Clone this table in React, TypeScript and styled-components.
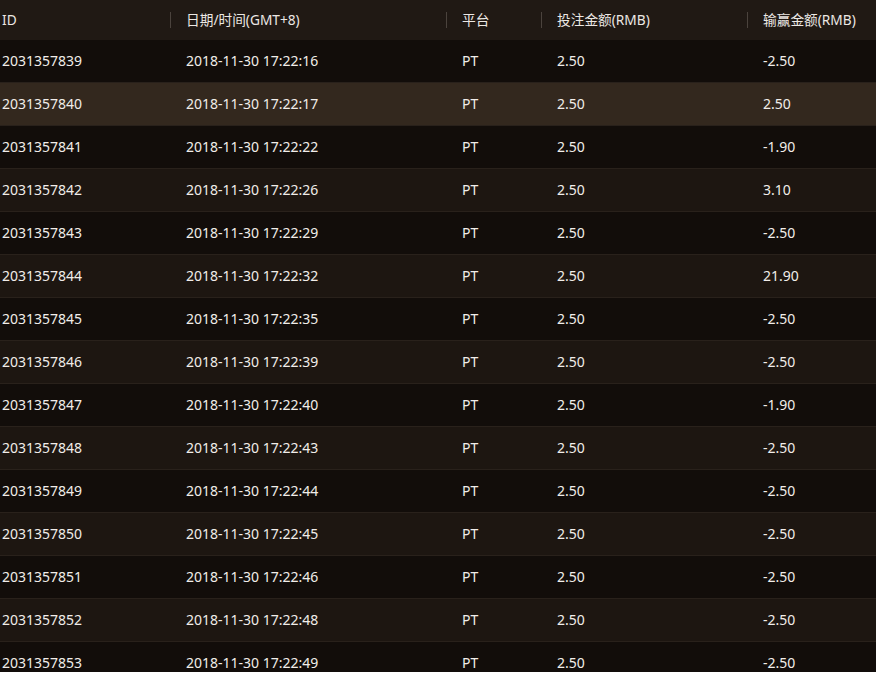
import styled, { createGlobalStyle } from 'styled-components';

const GlobalStyle = createGlobalStyle`
  html, body {
    margin: 0;
    padding: 0;
    background: #ffffff;
  }
  body {
    font-family: "Noto Sans", "Noto Sans CJK SC", sans-serif;
  }
`;

const StyledViewport = styled.div`
  width: 876px;
  height: 672px;
  overflow: hidden;
  background: #130e0b;
`;

const StyledTable = styled.div`
  display: grid;
  grid-template-columns: 170px 276px 95px 206px 129px;
  width: 876px;
`;

const StyledHeaderCell = styled.div<{ $first?: boolean }>`
  position: relative;
  height: 40px;
  box-sizing: border-box;
  display: flex;
  align-items: center;
  padding-left: ${({ $first }) => ($first ? '2px' : '16px')};
  padding-bottom: 2px;
  background: #201914;
  color: #ece8e4;
  font-size: 13.7px;
  white-space: nowrap;

  ${({ $first }) =>
    !$first &&
    `
    &::before {
      content: '';
      position: absolute;
      left: 0;
      top: 12px;
      width: 1px;
      height: 16px;
      background: #4b433d;
    }
  `}
`;

const StyledRow = styled.div<{ $tone: 'dark' | 'light' | 'active' }>`
  display: contents;

  > div {
    background: ${({ $tone }) => ($tone === 'active' ? '#33281e' : $tone === 'light' ? '#1d1611' : '#120d0a')};
  }
`;

const StyledCell = styled.div<{ $first?: boolean }>`
  height: 42px;
  display: flex;
  align-items: center;
  padding-left: ${({ $first }) => ($first ? '2px' : '16px')};
  border-bottom: 1px solid #29211b;
  color: #f1ede9;
  font-size: 14px;
  line-height: 1;
  white-space: nowrap;
`;

const columns = ['ID', '日期/时间(GMT+8)', '平台', '投注金额(RMB)', '输赢金额(RMB)'];

const rows = [
  ['2031357839', '17:22:16', '-2.50'],
  ['2031357840', '17:22:17', '2.50'],
  ['2031357841', '17:22:22', '-1.90'],
  ['2031357842', '17:22:26', '3.10'],
  ['2031357843', '17:22:29', '-2.50'],
  ['2031357844', '17:22:32', '21.90'],
  ['2031357845', '17:22:35', '-2.50'],
  ['2031357846', '17:22:39', '-2.50'],
  ['2031357847', '17:22:40', '-1.90'],
  ['2031357848', '17:22:43', '-2.50'],
  ['2031357849', '17:22:44', '-2.50'],
  ['2031357850', '17:22:45', '-2.50'],
  ['2031357851', '17:22:46', '-2.50'],
  ['2031357852', '17:22:48', '-2.50'],
  ['2031357853', '17:22:49', '-2.50'],
];

export default function App() {
  return (
    <>
      <GlobalStyle />
      <StyledViewport>
        <StyledTable>
          {columns.map((col, i) => (
            <StyledHeaderCell key={col} $first={i === 0}>
              {col}
            </StyledHeaderCell>
          ))}
          {rows.map(([id, time, win], i) => (
            <StyledRow key={id} $tone={i === 1 ? 'active' : i % 2 === 1 ? 'light' : 'dark'}>
              <StyledCell $first>{id}</StyledCell>
              <StyledCell>2018-11-30 {time}</StyledCell>
              <StyledCell>PT</StyledCell>
              <StyledCell>2.50</StyledCell>
              <StyledCell>{win}</StyledCell>
            </StyledRow>
          ))}
        </StyledTable>
      </StyledViewport>
    </>
  );
}
